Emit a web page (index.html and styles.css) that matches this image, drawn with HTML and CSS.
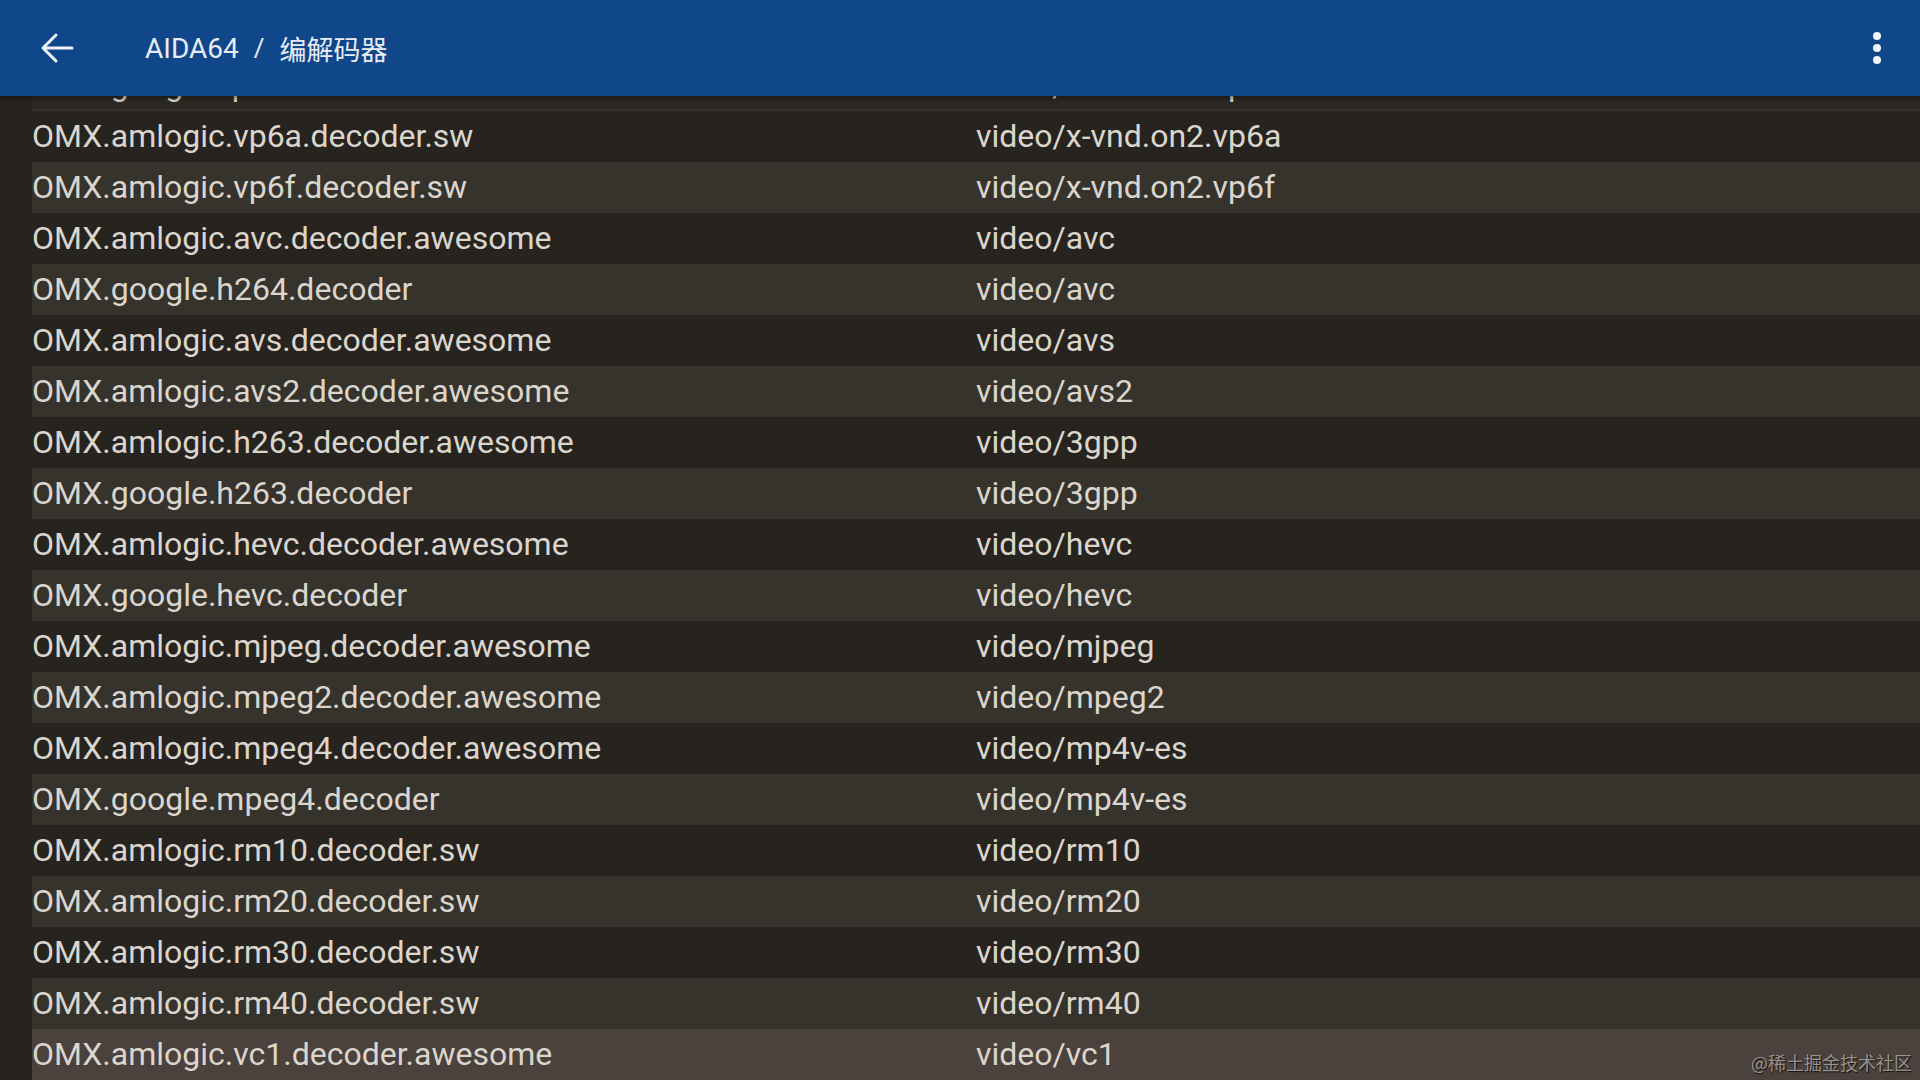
FILE: index.html
```html
<!DOCTYPE html>
<html lang="zh-CN">
<head>
  <meta charset="UTF-8" />
  <title>AIDA64 / 编解码器</title>
  <link rel="stylesheet" href="styles.css">
</head>
<body>
  <header class="topbar">
    <button class="back" aria-label="返回">
      <svg width="34" height="32" viewBox="0 0 34 32">
        <path d="M32 16H3 M16 3 L3 16 L16 29" fill="none" stroke="#eef2f8" stroke-width="3" stroke-linecap="round" stroke-linejoin="round"/>
      </svg>
    </button>
    <h1 class="title"><span>AIDA64</span><span class="sep">/</span><span class="cjk">编解码器</span></h1>
    <button class="menu" aria-label="更多">
      <svg width="10" height="34" viewBox="0 0 10 34">
        <circle cx="5" cy="5" r="4" fill="#f2f5fa"/>
        <circle cx="5" cy="17" r="4" fill="#f2f5fa"/>
        <circle cx="5" cy="29" r="4" fill="#f2f5fa"/>
      </svg>
    </button>
  </header>

  <main class="lista">
    <div class="linha cortada"><span>OMX.google.vp8.decoder</span><span>video/x-vnd.on2.vp8</span></div>
    <div class="linha"><span>OMX.amlogic.vp6a.decoder.sw</span><span>video/x-vnd.on2.vp6a</span></div>
    <div class="linha"><span>OMX.amlogic.vp6f.decoder.sw</span><span>video/x-vnd.on2.vp6f</span></div>
    <div class="linha"><span>OMX.amlogic.avc.decoder.awesome</span><span>video/avc</span></div>
    <div class="linha"><span>OMX.google.h264.decoder</span><span>video/avc</span></div>
    <div class="linha"><span>OMX.amlogic.avs.decoder.awesome</span><span>video/avs</span></div>
    <div class="linha"><span>OMX.amlogic.avs2.decoder.awesome</span><span>video/avs2</span></div>
    <div class="linha"><span>OMX.amlogic.h263.decoder.awesome</span><span>video/3gpp</span></div>
    <div class="linha"><span>OMX.google.h263.decoder</span><span>video/3gpp</span></div>
    <div class="linha"><span>OMX.amlogic.hevc.decoder.awesome</span><span>video/hevc</span></div>
    <div class="linha"><span>OMX.google.hevc.decoder</span><span>video/hevc</span></div>
    <div class="linha"><span>OMX.amlogic.mjpeg.decoder.awesome</span><span>video/mjpeg</span></div>
    <div class="linha"><span>OMX.amlogic.mpeg2.decoder.awesome</span><span>video/mpeg2</span></div>
    <div class="linha"><span>OMX.amlogic.mpeg4.decoder.awesome</span><span>video/mp4v-es</span></div>
    <div class="linha"><span>OMX.google.mpeg4.decoder</span><span>video/mp4v-es</span></div>
    <div class="linha"><span>OMX.amlogic.rm10.decoder.sw</span><span>video/rm10</span></div>
    <div class="linha"><span>OMX.amlogic.rm20.decoder.sw</span><span>video/rm20</span></div>
    <div class="linha"><span>OMX.amlogic.rm30.decoder.sw</span><span>video/rm30</span></div>
    <div class="linha"><span>OMX.amlogic.rm40.decoder.sw</span><span>video/rm40</span></div>
    <div class="linha selecionada"><span>OMX.amlogic.vc1.decoder.awesome</span><span>video/vc1</span></div>
  </main>

  <div class="marca">@稀土掘金技术社区</div>
</body>
</html>
```

FILE: styles.css
```css
* {
  margin: 0; padding: 0; box-sizing: border-box;
}
html, body {
  height: 100%;
}
body {
  background: #272420;
  font-family: Roboto, "Noto Sans", "Noto Sans CJK SC", sans-serif;
  overflow: hidden;
  position: relative;
}
.topbar {
  position: relative;
  z-index: 2;
  height: 96px;
  background: #10468a;
  display: flex;
  align-items: center;
  box-shadow: 0 2px 5px rgba(0,0,0,0.45);
}
.topbar button {
  background: transparent;
  border: none;
  cursor: pointer;
  display: flex;
}
.back {
  margin-left: 40px;
}
.title {
  margin-left: 71px;
  flex: 1;
  display: flex;
  align-items: center;
  gap: 15px;
  font-size: 28px;
  font-weight: 400;
  color: #e7ecf4;
}
.title .sep {
  font-size: 26px;
}
.title .cjk {
  font-family: "Noto Sans CJK SC", sans-serif;
  font-size: 27px;
}
.menu {
  margin-right: 38px;
}
.lista {
  margin-top: -36px;
  margin-left: 32px;
}
.linha {
  display: grid;
  grid-template-columns: 944px 1fr;
  height: 51px;
  line-height: 51px;
  font-size: 32px;
  color: #dbd6cd;
  white-space: nowrap;
}
.linha:nth-child(odd) {
  background: #36332d;
}
.linha.cortada {
  background: #2c2824;
  border-bottom: 2px solid #3b2e2a;
}
.linha.selecionada {
  background: #4b413d;
}
.marca {
  position: absolute;
  right: 8px;
  bottom: 5px;
  font-family: "Noto Sans CJK SC", sans-serif;
  font-size: 18px;
  color: rgba(180,175,170,0.8);
  text-shadow: 1px 1px 1px rgba(0,0,0,0.75);
}
```
